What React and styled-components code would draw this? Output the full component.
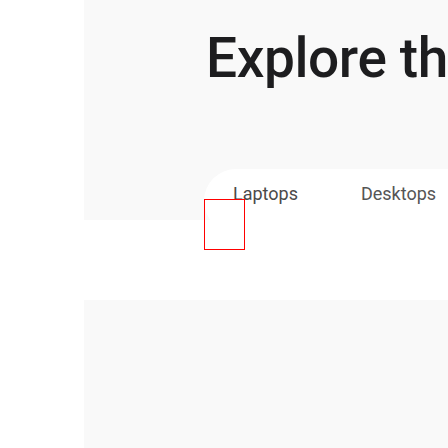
import React from "react";
import styled, { createGlobalStyle } from "styled-components";

const GlobalStyle = createGlobalStyle`
  html, body {
    margin: 0;
    padding: 0;
    background: #ffffff;
    overflow: hidden;
  }

  body {
    font-family: Roboto, "Liberation Sans", Arial, sans-serif;
  }
`;

const Page = styled.div`
  display: flex;
  flex-direction: column;
  gap: 80px;
  padding-left: 84px;
  width: 900px;
`;

const Hero = styled.section`
  background: #f9f9f9;
  height: 220px;
  padding: 28px 0 0 122px;
  box-sizing: border-box;
`;

const Heading = styled.h1`
  margin: 0;
  font-size: 55px;
  line-height: 1.1;
  font-weight: 500;
  letter-spacing: -0.4px;
  color: #1d1d1f;
  white-space: nowrap;
`;

const TabBar = styled.nav`
  position: relative;
  display: flex;
  gap: 5px;
  margin: 80px 0 0 -2px;
  height: 64px;
  padding-top: 13px;
  box-sizing: border-box;
  background: #ffffff;
  border-radius: 32px 0 0 32px;
`;

const Tab = styled.span`
  padding: 0 29px;
  font-size: 18px;
  line-height: 24px;
  white-space: nowrap;
  color: ${(p) => (p.active ? "#4a4a4a" : "#555555")};
`;

const FocusBox = styled.div`
  position: absolute;
  left: 0;
  top: 30px;
  width: 41px;
  height: 51px;
  box-sizing: border-box;
  border: 1px solid #ff0000;
`;

const Panel = styled.section`
  background: #f9f9f9;
  height: 300px;
`;

const tabs = ["Laptops", "Desktops", "Tablets"];

export default function App() {
  return (
    <>
      <GlobalStyle />
      <Page>
        <Hero>
          <Heading>Explore the lineup</Heading>
          <TabBar>
            {tabs.map((t, i) => (
              <Tab key={t} active={i === 0}>
                {t}
              </Tab>
            ))}
            <FocusBox />
          </TabBar>
        </Hero>
        <Panel />
      </Page>
    </>
  );
}
